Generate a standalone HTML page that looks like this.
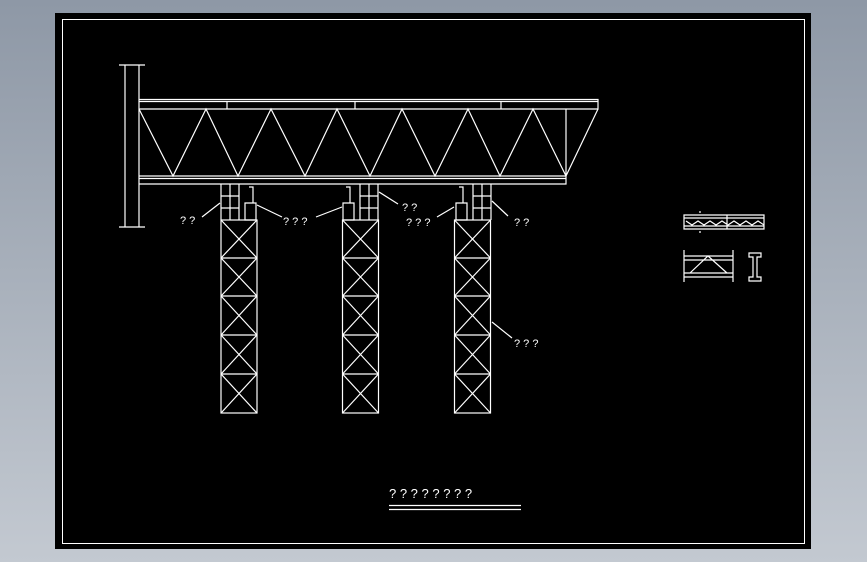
<!DOCTYPE html><html><head><style>html,body{margin:0;padding:0;background:#a3acb8}svg{display:block}</style></head><body>
<svg width="867" height="562" viewBox="0 0 867 562" xmlns="http://www.w3.org/2000/svg">
<defs><linearGradient id="g" x1="0" y1="0" x2="0" y2="1"><stop offset="0" stop-color="#8e98a6"/><stop offset="1" stop-color="#c3c9d1"/></linearGradient>
<g id="tw" fill="none" stroke="#fff" stroke-width="1.2">
<rect x="0" y="0" width="36" height="193"/>
<path d="M0 38H36M0 76H36M0 115H36M0 154H36M0 0L36 38M36 0L0 38M0 38L36 76M36 38L0 76M0 76L36 115M36 76L0 115M0 115L36 154M36 115L0 154M0 154L36 193M36 154L0 193"/>
</g></defs>
<rect width="867" height="562" fill="url(#g)"/>
<rect x="55" y="13" width="756" height="536" fill="#000"/>
<rect x="62.5" y="19.5" width="742" height="524" fill="none" stroke="#fff"/>
<g fill="none" stroke="#fff" stroke-width="1.2">
<path d="M125 65V227M139 65V227M119 65H145M119 227H145"/>
<path d="M139 99.5H598V109H139M139 101.5H598M598 99.5V109M227 101.5V109M355 101.5V109M501 101.5V109"/>
<path d="M139 176H566V184H139M139 178.5H566M566 109V176L598 109"/>
<path d="M139 109L173 176L206 109L238 176L271 109L305 176L337 109L370 176L402 109L435 176L468 109L500 176L533 109L566 176"/>
<use href="#tw" x="221" y="220"/><use href="#tw" x="342.5" y="220"/><use href="#tw" x="454.5" y="220"/>
<path d="M221 184V220M239 184V220M230 184V220M221 196H239M221 208H239M245 203H256V220H245ZM249 187H253V203"/>
<path d="M360 184V220M378 184V220M369 184V220M360 196H378M360 208H378M343 203H354V220H343ZM346 187H350V203"/>
<path d="M473 184V220M491 184V220M482 184V220M473 196H491M473 208H491M456 203H467V220H456ZM459 187H463V203"/>
<path d="M202 217L220 203M257 205L282 217M316 217L342 207M379 192L398 204M437 217L454 207M492 201L508 216M492 322L512 338"/>
<path d="M389 505.5H521M389 509.5H521"/>
<path d="M684 215H764V229H684ZM684 218H764M684 226H764M727 215V229M700 211V213M700 231V233M686 221L692 225L698 221L704 225L710 221L716 225L722 221L728 225L734 221L740 225L746 221L752 225L758 221L764 225"/>
<path d="M684 250V282M733 250V282M684 256H733M684 260H733M684 273H733M684 277H733M690 273L708 256L727 273"/>
<path d="M749 253H761V257H757V277H761V281H749V277H753V257H749Z"/>
</g>
<g fill="#fff" font-family="Liberation Sans Narrow, Liberation Sans, sans-serif" font-size="11">
<text x="180" y="224">? ?</text><text x="283" y="225">? ? ?</text><text x="402" y="211">? ?</text><text x="406" y="226">? ? ?</text><text x="514" y="226">? ?</text><text x="514" y="347">? ? ?</text>
<text x="389" y="498" font-size="13">? ? ? ? ? ? ? ?</text>
</g>
</svg></body></html>
